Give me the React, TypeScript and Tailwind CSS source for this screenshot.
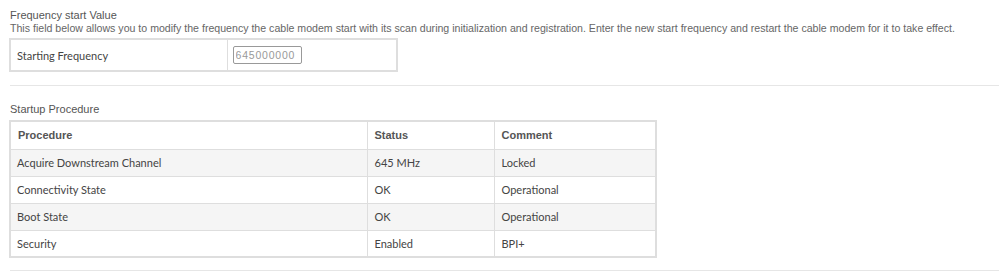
import React from 'react';

const rows = [
    { procedure: 'Acquire Downstream Channel', status: '645 MHz', comment: 'Locked' },
    { procedure: 'Connectivity State', status: 'OK', comment: 'Operational' },
    { procedure: 'Boot State', status: 'OK', comment: 'Operational' },
    { procedure: 'Security', status: 'Enabled', comment: 'BPI+' },
];

export default function App() {
    return (
        <div className="min-h-screen bg-white pt-[8px] pl-[10px] text-[#555] font-['Liberation_Sans',Arial,sans-serif] text-[11px] leading-[13px]">
            <div className="mt-px">Frequency start Value</div>
            <div className="text-[10.6px] text-[#666]">
                This field below allows you to modify the frequency the cable modem start with its scan during initialization and registration. Enter the new start frequency and restart the cable modem for it to take effect.
            </div>

            <table className="mt-[3px] -ml-px w-[389px] border-collapse border-2 border-[#dedede] font-['Lato',sans-serif] text-[#444]">
                <tbody>
                    <tr className="h-[32px]">
                        <td className="w-[217px] border border-[#dedede] pl-[6px]">Starting Frequency</td>
                        <td className="border border-[#dedede] pl-[5px]">
                            <input
                                defaultValue="645000000"
                                className="h-[18px] w-[69px] rounded-[2px] border border-[#999] px-[2px] text-[10.5px] tracking-[0.8px] text-[#999] font-['Liberation_Sans',Arial,sans-serif] outline-none"
                            />
                        </td>
                    </tr>
                </tbody>
            </table>

            <div className="mt-[13px] h-px bg-[#e6e6e6]" />

            <div className="mt-[17px]">Startup Procedure</div>

            <table className="mt-[4px] -ml-px w-[648px] border-collapse border-2 border-[#dedede] font-['Lato',sans-serif] text-[#444]">
                <thead>
                    <tr className="h-[28px] bg-white text-left font-['Liberation_Sans',Arial,sans-serif] font-bold text-[#555]">
                        <th className="w-[357px] border border-[#dedede] pl-[7px] font-bold">Procedure</th>
                        <th className="w-[127px] border border-[#dedede] pl-[7px] font-bold">Status</th>
                        <th className="border border-[#dedede] pl-[7px] font-bold">Comment</th>
                    </tr>
                </thead>
                <tbody>
                    {rows.map((r, i) => (
                        <tr key={r.procedure} className={`h-[27px] ${i % 2 === 0 ? 'bg-[#f5f5f5]' : 'bg-white'}`}>
                            <td className="border border-[#dedede] pl-[6px]">{r.procedure}</td>
                            <td className="border border-[#dedede] pl-[7px]">{r.status}</td>
                            <td className="border border-[#dedede] pl-[7px]">{r.comment}</td>
                        </tr>
                    ))}
                </tbody>
            </table>

            <div className="mt-[12px] h-px bg-[#e6e6e6]" />
        </div>
    );
}
